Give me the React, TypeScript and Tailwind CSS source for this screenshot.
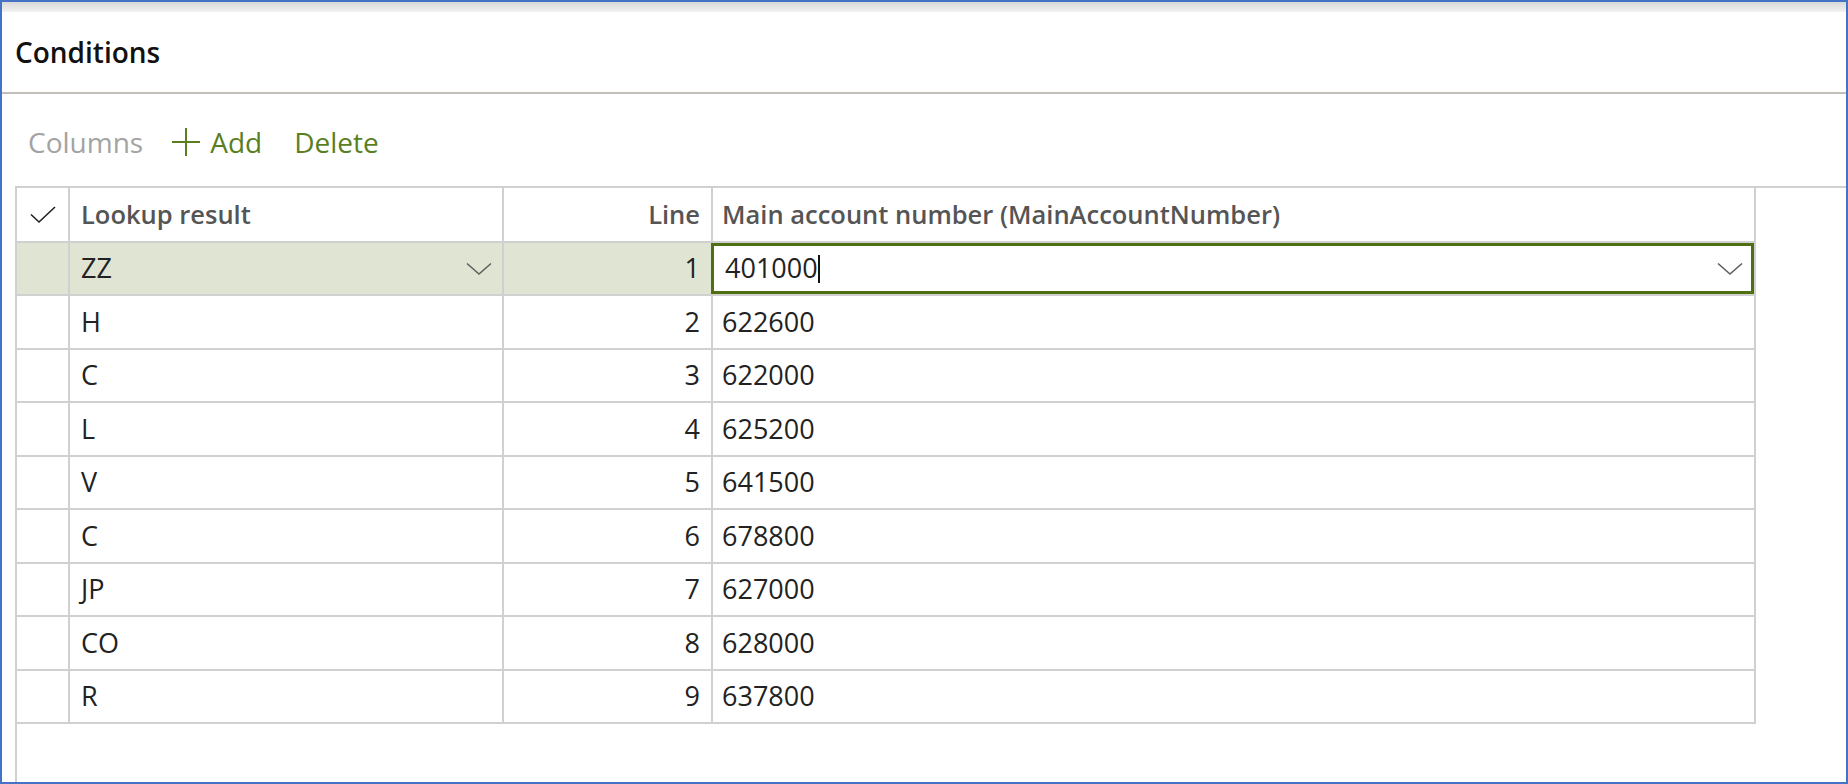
import React from 'react';

const rows = [
  { result: 'ZZ', line: 1, account: '401000' },
  { result: 'H', line: 2, account: '622600' },
  { result: 'C', line: 3, account: '622000' },
  { result: 'L', line: 4, account: '625200' },
  { result: 'V', line: 5, account: '641500' },
  { result: 'C', line: 6, account: '678800' },
  { result: 'JP', line: 7, account: '627000' },
  { result: 'CO', line: 8, account: '628000' },
  { result: 'R', line: 9, account: '637800' },
];

const Chevron = () => (
  <svg width="26" height="14" viewBox="0 0 26 14" fill="none">
    <path d="M1 1.5 L13 12 L25 1.5" stroke="#5f5f5f" strokeWidth="1.6" />
  </svg>
);

export default function App() {
  return (
    <div className="w-[1848px] h-[784px] border-2 border-[#4472c4] bg-white flex flex-col font-['Segoe_UI','Open_Sans',sans-serif] overflow-hidden">
      <div className="h-[10px] bg-gradient-to-b from-[#d8d8d8] to-[#f2f2f2]" />
      <div className="h-[80px] flex items-center pl-[13px]">
        <span className="text-[28px] font-semibold text-[#111]">Conditions</span>
      </div>
      <div className="h-[2px] bg-[#c2bfbb]" />

      {/* toolbar */}
      <div className="h-[92px] flex items-center pl-[26px] pt-[3px]">
        <span className="text-[28px] text-[#a3a3a3]">Columns</span>
        <svg className="ml-[29px]" width="28" height="28" viewBox="0 0 28 28" fill="none">
          <path d="M14 0 V28 M0 14 H28" stroke="#5b7f1f" strokeWidth="2" />
        </svg>
        <span className="ml-[10px] text-[28px] text-[#5b7f1f]">Add</span>
        <span className="ml-[32px] text-[28px] text-[#5b7f1f]">Delete</span>
      </div>

      {/* grid */}
      <div className="flex-1 ml-[13px] border-l-2 border-t-2 border-[#d0d0d0]">
        <div className="flex h-[55px] text-[25.5px] font-semibold text-[#555]">
          <div className="w-[53px] border-r-2 border-b-2 border-[#d0d0d0] flex items-center justify-center">
            <svg width="26" height="18" viewBox="0 0 26 18" fill="none">
              <path d="M1 8.5 L9 16 L25 1" stroke="#222" strokeWidth="1.6" />
            </svg>
          </div>
          <div className="w-[434px] border-r-2 border-b-2 border-[#d0d0d0] flex items-center pl-[11px]">Lookup result</div>
          <div className="w-[209px] border-r-2 border-b-2 border-[#d0d0d0] flex items-center justify-end pr-[11px]">Line</div>
          <div className="w-[1043px] border-r-2 border-b-2 border-[#d0d0d0] flex items-center pl-[9px]">
            Main account number (MainAccountNumber)
          </div>
        </div>
        {rows.map((r, i) => {
          const sel = i === 0;
          const bg = sel ? 'bg-[#e0e5d3]' : 'bg-white';
          return (
            <div key={i} className="flex h-[53.44px] text-[27px] text-[#222]">
              <div className={`w-[53px] border-r-2 border-b-2 border-[#d0d0d0] ${bg}`} />
              <div className={`w-[434px] border-r-2 border-b-2 border-[#d0d0d0] flex items-center pl-[11px] pr-[10px] ${bg}`}>
                <span className="flex-1">{r.result}</span>
                {sel && <Chevron />}
              </div>
              <div className={`w-[209px] border-r-2 border-b-2 border-[#d0d0d0] flex items-center justify-end pr-[11px] ${bg}`}>
                {r.line}
              </div>
              <div className="w-[1043px] border-r-2 border-b-2 border-[#d0d0d0] flex items-center">
                {sel ? (
                  <div className="-ml-[2px] w-[1043px] h-full border-[3px] border-[#4f7012] bg-white flex items-center pl-[11px] pr-[8px]">
                    <span>{r.account}</span>
                    <span className="inline-block w-[2px] h-[28px] bg-[#111]" />
                    <span className="flex-1" />
                    <Chevron />
                  </div>
                ) : (
                  <span className="pl-[9px]">{r.account}</span>
                )}
              </div>
            </div>
          );
        })}
      </div>
    </div>
  );
}
